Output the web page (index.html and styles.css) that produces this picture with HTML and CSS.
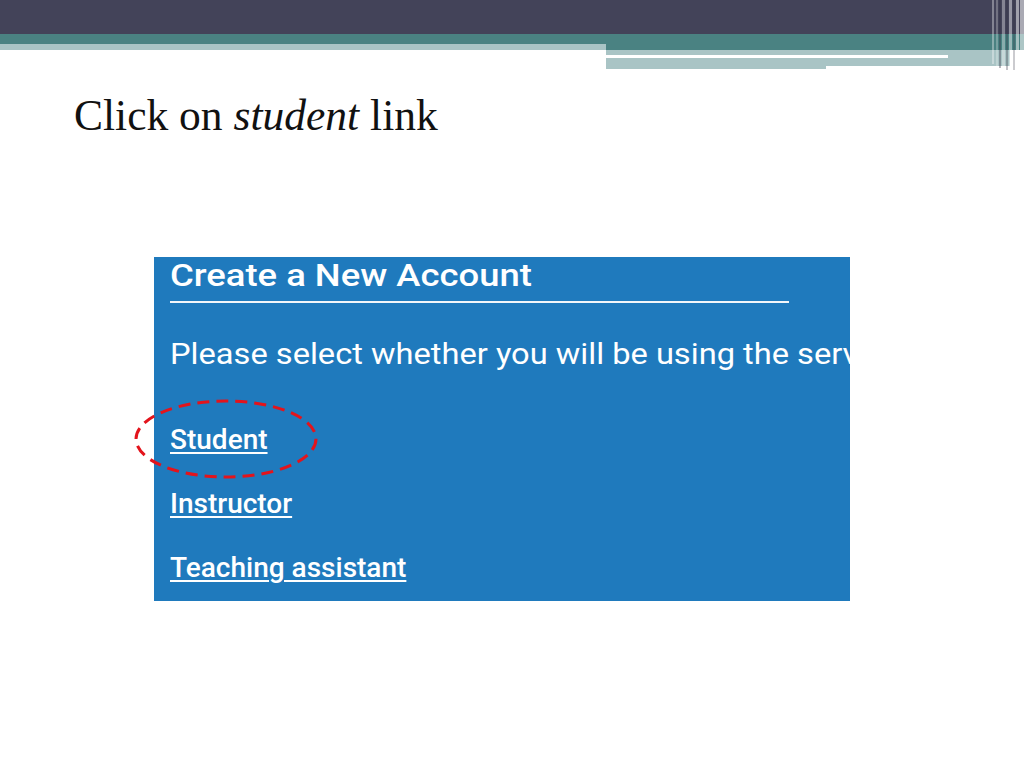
FILE: index.html
```html
<!DOCTYPE html>
<html lang="en">
<head>
<meta charset="utf-8">
<title>Click on student link</title>
<link rel="stylesheet" href="styles.css">
</head>
<body>
<header class="banner">
  <svg class="banner-art" width="1024" height="72" viewBox="0 0 1024 72" aria-hidden="true">
    <rect x="0" y="0" width="1024" height="34" fill="#434359"/>
    <rect x="0" y="34" width="1024" height="10" fill="#4a8282"/>
    <rect x="0" y="44" width="606" height="6" fill="#a9c4c5"/>
    <rect x="606" y="44" width="418" height="6" fill="#4a8282"/>
    <rect x="606" y="50" width="404" height="16" fill="#a9c4c5"/>
    <rect x="606" y="66" width="220" height="3" fill="#a9c4c5"/>
    <rect x="606" y="55" width="342" height="3" fill="#ffffff"/>
    <g>
      <rect x="992" y="0" width="2" height="64" fill="#ffffff" opacity="0.35"/>
      <rect x="996" y="0" width="2" height="66" fill="#ffffff" opacity="0.25"/>
      <rect x="999" y="0" width="2" height="68" fill="#2e2e3e" opacity="0.35"/>
      <rect x="1002" y="0" width="3" height="68" fill="#ffffff" opacity="0.35"/>
      <rect x="1006" y="0" width="2" height="70" fill="#2e2e3e" opacity="0.3"/>
      <rect x="1009" y="0" width="3" height="70" fill="#ffffff" opacity="0.45"/>
      <rect x="1013" y="0" width="2" height="70" fill="#2e2e3e" opacity="0.25"/>
      <rect x="1016" y="0" width="3" height="70" fill="#ffffff" opacity="0.5"/>
      <rect x="1020" y="0" width="4" height="70" fill="#ffffff" opacity="0.55"/>
    </g>
  </svg>
</header>
<main class="slide">
  <h1 class="slide-title">Click on <em>student</em> link</h1>
  <div class="shot">
    <section class="account">
      <h2 class="account-title">Create a New Account</h2>
      <hr class="account-rule">
      <p class="account-text">Please select whether you will be using the service as a student, instructor or teaching assistant</p>
      <ul class="role-list">
        <li><a class="role-link" href="#">Student</a></li>
        <li><a class="role-link" href="#">Instructor</a></li>
        <li><a class="role-link" href="#">Teaching assistant</a></li>
      </ul>
    </section>
    <svg class="callout" width="190" height="86" viewBox="0 0 190 86" aria-hidden="true">
      <ellipse cx="95" cy="43" rx="90" ry="38" fill="none" stroke="#e3141c" stroke-width="3" stroke-dasharray="12 7"/>
    </svg>
  </div>
</main>
</body>
</html>
```
FILE: styles.css
```css
html, body {
  margin: 0;
  padding: 0;
  background: #ffffff;
}

body {
  width: 1024px;
  height: 768px;
  overflow: hidden;
  font-family: "Liberation Serif", serif;
}

.banner {
  height: 72px;
}

.banner-art {
  display: block;
}

.slide {
  padding-left: 74px;
}

.slide-title {
  margin: 17px 0 0 0;
  font-family: "Liberation Serif", "DejaVu Serif", serif;
  font-weight: normal;
  font-size: 43.5px;
  line-height: 52px;
  color: #111111;
}

.slide-title em {
  font-style: italic;
}

.shot {
  position: relative;
  margin: 116px 0 0 80px;
  width: 696px;
}

.account {
  box-sizing: border-box;
  width: 696px;
  height: 344px;
  background: #1f7abd;
  color: #ffffff;
  padding: 0 0 0 16px;
  overflow: hidden;
  font-family: Roboto, "Liberation Sans", sans-serif;
}

.account-title {
  margin: 0;
  padding-top: 1px;
  font-size: 31px;
  font-weight: 500;
  line-height: 36px;
  white-space: nowrap;
  transform: scaleX(1.175);
  transform-origin: left center;
}

.account-rule {
  width: 619px;
  margin: 7px 0 0 0;
  border: 0;
  height: 2px;
  background: #f2f6fa;
}

.account-text {
  margin: 33px 0 0 0;
  font-size: 29px;
  line-height: 36px;
  white-space: nowrap;
  transform: scaleX(1.125);
  transform-origin: left center;
}

.role-list {
  list-style: none;
  margin: 51px 0 0 0;
  padding: 0;
  display: flex;
  flex-direction: column;
  gap: 30px;
}

.role-link {
  color: #ffffff;
  font-size: 28px;
  font-weight: 500;
  line-height: 34px;
  text-decoration: underline;
  text-decoration-thickness: 2px;
  text-underline-offset: 3px;
}

.callout {
  position: absolute;
  left: -23px;
  top: 139px;
}
```
